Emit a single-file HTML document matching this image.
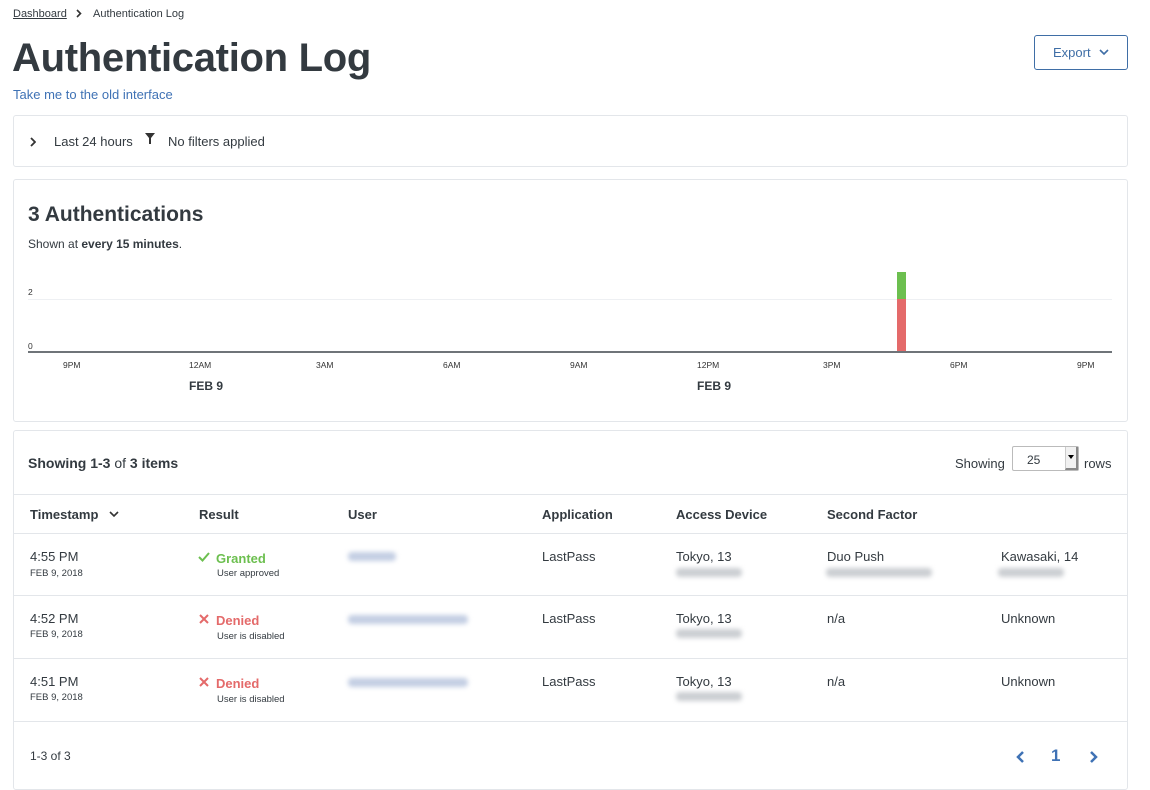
<!DOCTYPE html>
<html><head><style>
*{margin:0;padding:0;box-sizing:border-box}
body{width:1150px;height:780px;background:#fff;font-family:"Liberation Sans",sans-serif;color:#333a40;position:relative;overflow:hidden}
.a{position:absolute;white-space:nowrap}
.card{position:absolute;left:13px;width:1115px;border:1px solid #e3e6ea;border-radius:3px;background:#fff}
.hl{position:absolute;left:14px;width:1113px;height:1px;background:#e3e6ea}
.blur{position:absolute;background:#c3cee3;filter:blur(2.5px);border-radius:4px;height:9px}
.g{background:#cbced2}
.t{font-size:13px}
.s{font-size:9.5px}
.tl{font-size:8.5px;color:#333}
.th{font-size:13px;font-weight:bold}
</style></head><body>
<div class="a" style="left:13px;top:8px;font-size:11px;text-decoration:underline">Dashboard</div>
<svg class="a" style="left:76px;top:9px" width="6" height="9"><path d="M1 1L4.5 4.5L1 8" stroke="#333" stroke-width="1.6" fill="none"/></svg>
<div class="a" style="left:93px;top:8px;font-size:11px">Authentication Log</div>
<div class="a" style="left:12px;top:36px;font-size:40px;font-weight:bold;letter-spacing:-0.3px">Authentication Log</div>
<div class="a" style="left:13px;top:87px;font-size:13px;color:#3f72b5">Take me to the old interface</div>
<div class="a" style="left:1034px;top:35px;width:94px;height:35px;border:1px solid #3f6ea6;border-radius:3px;color:#3f6ea6;font-size:13px;line-height:33px;padding-left:18px">Export</div>
<svg class="a" style="left:1099px;top:49px" width="10" height="7"><path d="M1 1L5 5L9 1" stroke="#3f6ea6" stroke-width="1.6" fill="none"/></svg>

<div class="card" style="top:115px;height:52px"></div>
<svg class="a" style="left:30px;top:137px" width="6" height="10"><path d="M1 1L5 5L1 9" stroke="#333" stroke-width="1.8" fill="none"/></svg>
<div class="a t" style="left:54px;top:134px">Last 24 hours</div>
<svg class="a" style="left:145px;top:133px" width="10" height="11"><path d="M0 0H10L6 5V11H4V5Z" fill="#333"/></svg>
<div class="a t" style="left:168px;top:134px">No filters applied</div>

<div class="card" style="top:179px;height:243px"></div>
<div class="a" style="left:28px;top:203px;font-size:21px;font-weight:bold">3 Authentications</div>
<div class="a" style="left:28px;top:237px;font-size:12px">Shown at <b>every 15 minutes</b>.</div>
<div class="a tl" style="left:28px;top:287px">2</div>
<div class="a tl" style="left:28px;top:341px">0</div>
<div class="a" style="left:28px;top:299px;width:1084px;height:1px;background:#eef0f3"></div>
<div class="a" style="left:28px;top:351px;width:1084px;height:2px;background:#6f7479"></div>
<div class="a" style="left:897px;top:299px;width:9px;height:52px;background:#e46a6a"></div>
<div class="a" style="left:897px;top:272px;width:9px;height:27px;background:#6cbf4f"></div>
<div class="a tl" style="left:63px;top:360px">9PM</div>
<div class="a tl" style="left:189px;top:360px">12AM</div>
<div class="a tl" style="left:316px;top:360px">3AM</div>
<div class="a tl" style="left:443px;top:360px">6AM</div>
<div class="a tl" style="left:570px;top:360px">9AM</div>
<div class="a tl" style="left:697px;top:360px">12PM</div>
<div class="a tl" style="left:823px;top:360px">3PM</div>
<div class="a tl" style="left:950px;top:360px">6PM</div>
<div class="a tl" style="left:1077px;top:360px">9PM</div>
<div class="a" style="left:189px;top:379px;font-size:12px;font-weight:bold">FEB 9</div>
<div class="a" style="left:697px;top:379px;font-size:12px;font-weight:bold">FEB 9</div>

<div class="card" style="top:430px;height:360px"></div>
<div class="a" style="left:28px;top:455px;font-size:14px;font-weight:bold">Showing 1-3 <span style="font-weight:normal">of</span> 3 items</div>
<div class="a t" style="left:955px;top:456px">Showing</div>
<div class="a" style="left:1012px;top:446px;width:67px;height:25px;border:1px solid #bbb;border-radius:2px;font-size:12px;padding:6px 0 0 14px;overflow:hidden">25</div>
<div class="a" style="left:1065px;top:447px;width:13px;height:23px;background:#f1f1f1;border-left:1px solid #ccc;border-right:2px solid #888;border-bottom:2px solid #888"></div>
<div class="a" style="left:1068px;top:455px;width:0;height:0;border-left:3px solid transparent;border-right:3px solid transparent;border-top:4px solid #000"></div>
<div class="a t" style="left:1084px;top:456px">rows</div>

<div class="hl" style="top:494px"></div>
<div class="a th" style="left:30px;top:507px">Timestamp</div>
<svg class="a" style="left:109px;top:511px" width="10" height="7"><path d="M1 1L5 5L9 1" stroke="#333" stroke-width="1.6" fill="none"/></svg>
<div class="a th" style="left:199px;top:507px">Result</div>
<div class="a th" style="left:348px;top:507px">User</div>
<div class="a th" style="left:542px;top:507px">Application</div>
<div class="a th" style="left:676px;top:507px">Access Device</div>
<div class="a th" style="left:827px;top:507px">Second Factor</div>
<div class="hl" style="top:533px"></div>

<div class="a t" style="left:30px;top:549px">4:55 PM</div>
<div class="a s" style="left:30px;top:568px">FEB 9, 2018</div>
<svg class="a" style="left:198px;top:552px" width="12" height="10"><path d="M1 5L4.5 8.5L11 1" stroke="#6cbf4f" stroke-width="2" fill="none"/></svg>
<div class="a" style="left:216px;top:551px;color:#6cbf4f;font-size:13px;font-weight:bold">Granted</div>
<div class="a s" style="left:217px;top:568px">User approved</div>
<div class="blur" style="left:348px;top:552px;width:48px"></div>
<div class="a t" style="left:542px;top:549px">LastPass</div>
<div class="a t" style="left:676px;top:549px">Tokyo, 13</div>
<div class="blur g" style="left:676px;top:568px;width:66px"></div>
<div class="a t" style="left:827px;top:549px">Duo Push</div>
<div class="blur g" style="left:826px;top:568px;width:106px"></div>
<div class="a t" style="left:1001px;top:549px">Kawasaki, 14</div>
<div class="blur g" style="left:998px;top:568px;width:66px"></div>
<div class="hl" style="top:595px"></div>

<div class="a t" style="left:30px;top:611px">4:52 PM</div>
<div class="a s" style="left:30px;top:629px">FEB 9, 2018</div>
<svg class="a" style="left:199px;top:614px" width="10" height="10"><path d="M1 1L9 9M9 1L1 9" stroke="#e46a6a" stroke-width="2" fill="none"/></svg>
<div class="a" style="left:216px;top:613px;color:#e46a6a;font-size:13px;font-weight:bold">Denied</div>
<div class="a s" style="left:217px;top:631px">User is disabled</div>
<div class="blur" style="left:348px;top:615px;width:120px"></div>
<div class="a t" style="left:542px;top:611px">LastPass</div>
<div class="a t" style="left:676px;top:611px">Tokyo, 13</div>
<div class="blur g" style="left:676px;top:629px;width:66px"></div>
<div class="a t" style="left:827px;top:611px">n/a</div>
<div class="a t" style="left:1001px;top:611px">Unknown</div>
<div class="hl" style="top:658px"></div>

<div class="a t" style="left:30px;top:674px">4:51 PM</div>
<div class="a s" style="left:30px;top:692px">FEB 9, 2018</div>
<svg class="a" style="left:199px;top:677px" width="10" height="10"><path d="M1 1L9 9M9 1L1 9" stroke="#e46a6a" stroke-width="2" fill="none"/></svg>
<div class="a" style="left:216px;top:676px;color:#e46a6a;font-size:13px;font-weight:bold">Denied</div>
<div class="a s" style="left:217px;top:694px">User is disabled</div>
<div class="blur" style="left:348px;top:678px;width:120px"></div>
<div class="a t" style="left:542px;top:674px">LastPass</div>
<div class="a t" style="left:676px;top:674px">Tokyo, 13</div>
<div class="blur g" style="left:676px;top:692px;width:66px"></div>
<div class="a t" style="left:827px;top:674px">n/a</div>
<div class="a t" style="left:1001px;top:674px">Unknown</div>
<div class="hl" style="top:721px"></div>

<div class="a" style="left:30px;top:749px;font-size:12px">1-3 of 3</div>
<svg class="a" style="left:1016px;top:750px" width="10" height="14"><path d="M7 2L2 7L7 12" stroke="#3f72b5" stroke-width="2.5" fill="none"/></svg>
<div class="a" style="left:1051px;top:746px;font-size:17px;font-weight:bold;color:#3f72b5">1</div>
<svg class="a" style="left:1088px;top:750px" width="10" height="14"><path d="M3 2L8 7L3 12" stroke="#3f72b5" stroke-width="2.5" fill="none"/></svg>
</body></html>
